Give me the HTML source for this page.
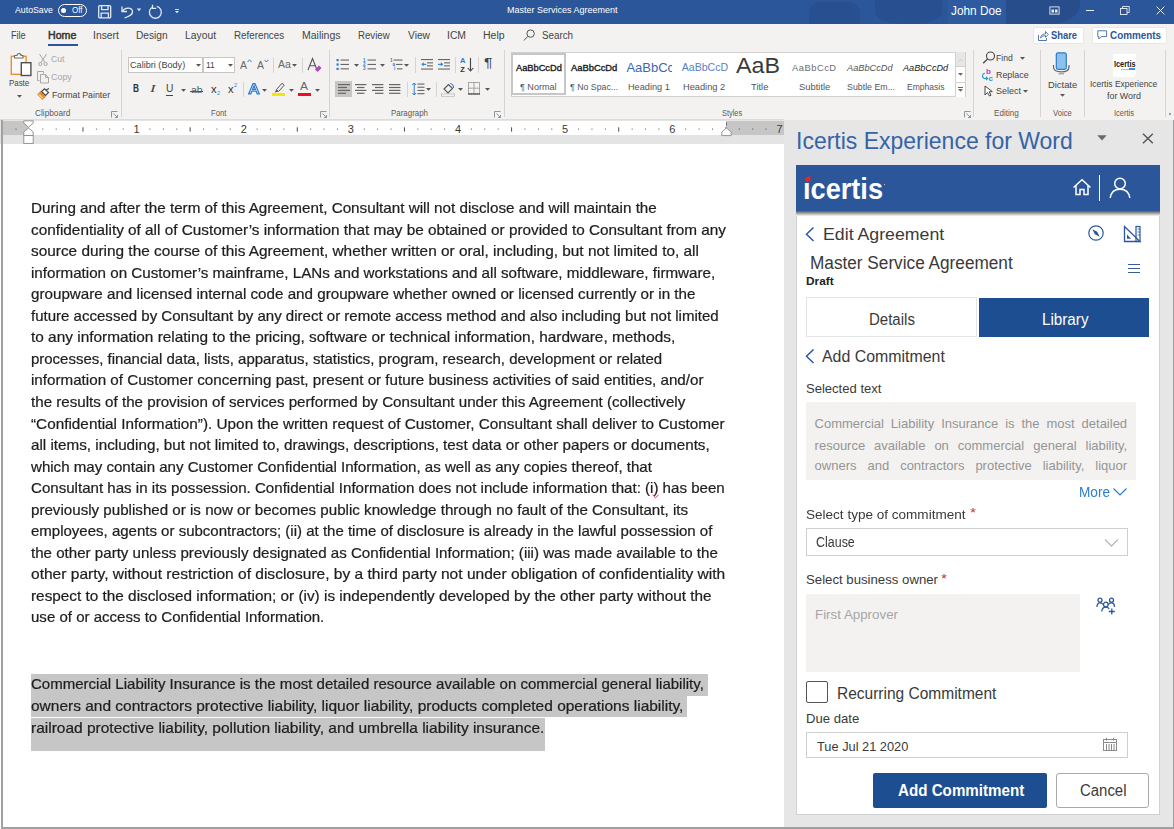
<!DOCTYPE html>
<html><head><meta charset="utf-8">
<style>
*{margin:0;padding:0;box-sizing:border-box}
html,body{width:1174px;height:829px;overflow:hidden;background:#fff;font-family:"Liberation Sans",sans-serif}
.a{position:absolute}
svg.a{overflow:visible}
.t{position:absolute;white-space:nowrap;line-height:1;transform-origin:0 0}
.dl{will-change:transform;position:absolute;left:30.6px;font-size:14.5px;color:#1e1e1e;-webkit-text-stroke:0.22px #1e1e1e;white-space:nowrap;line-height:1;transform-origin:0 0}
</style></head><body>
<div class="a" style="left:0px;top:0px;width:1174px;height:24px;background:#2b579a;"></div>
<div class="a" style="left:809px;top:2px;width:51px;height:22px;background:#284f8f;border-radius:11px 11px 0 0"></div>
<div class="a" style="left:875px;top:0px;width:67px;height:24px;background:#284f8f;border-radius:0 0 30px 30px/0 0 12px 12px"></div>
<div class="a" style="left:1006px;top:0px;width:74px;height:24px;background:#284d8b;border-radius:0 0 30px 0/0 0 20px 0"></div>
<div class="a" style="left:948px;top:0px;width:58px;height:24px;background:#2e5b9f;"></div>
<div class="t" style="left: 15px; top: 5.36px; font-size: 9.5px; color: rgb(255, 255, 255); transform: scaleX(0.9223); transform-origin: 0px 0px;">AutoSave</div>
<div class="a" style="left:58px;top:3.5px;width:29px;height:13px;background:transparent;border:1px solid #fff;border-radius:7px"></div>
<div class="a" style="left:61.3px;top:7.6px;width:5px;height:5px;background:#fff;border-radius:50%"></div>
<div class="t" style="left: 72px; top: 5.69px; font-size: 8.5px; color: rgb(255, 255, 255); transform: scaleX(0.9385); transform-origin: 0px 0px;">Off</div>
<svg class="a" style="left:97px;top:4px;" width="16" height="16" viewBox="0 0 16 16"><g fill="none" stroke="#e3e8f1" stroke-width="1.3"><rect x="1.7" y="1.6" width="12" height="12.3" rx="1"></rect><path d="M4.6 1.6 V5.6 H11 V1.6"></path><path d="M4.2 13.9 V9.2 H11.4 V13.9"></path></g></svg>
<svg class="a" style="left:120px;top:4px;" width="16" height="16" viewBox="0 0 16 16"><g fill="none" stroke="#e3e8f1" stroke-width="1.3"><path d="M2 2.5 V7.5 H7"></path><path d="M2.3 7.3 C4.5 3.5 12 2.8 12.5 7.5 C12.8 10 10.5 12 4.5 14"></path></g></svg>
<svg class="a" style="left:136px;top:8px;" width="6" height="4" viewBox="0 0 6 4"><path d="M0.8 0.5 H5.2 L3 3.2Z" fill="#e3e8f1"></path></svg>
<svg class="a" style="left:147px;top:4px;" width="16" height="16" viewBox="0 0 16 16"><g fill="none" stroke="#e3e8f1" stroke-width="1.3"><path d="M9.8 2.4 A6 6 0 1 1 4.8 3.4"></path><path d="M5.5 0.8 V4.4 H9.2"></path></g></svg>
<svg class="a" style="left:174px;top:8px;" width="6" height="6" viewBox="0 0 6 6"><rect x="1" y="1" width="4" height="0.9" fill="#e3e8f1"></rect><path d="M1 3 H5 L3 5.2Z" fill="#e3e8f1"></path></svg>
<div class="t" style="left: 507px; top: 5.26px; font-size: 9.5px; color: rgb(255, 255, 255); transform: scaleX(0.947); transform-origin: 0px 0px;">Master Services Agreement</div>
<div class="t" style="left: 951px; top: 4.57px; font-size: 12.5px; color: rgb(255, 255, 255); transform: scaleX(0.9455); transform-origin: 0px 0px;">John Doe</div>
<svg class="a" style="left:1049px;top:6px;" width="11" height="9" viewBox="0 0 11 9"><g fill="none" stroke="#e8edf5" stroke-width="0.9"><rect x="0.9" y="0.9" width="9.2" height="7.2"></rect></g><path d="M2.5 3.5 H5 V6.5 H2.5Z M6 3.5 H8.5 V6.5 H6Z" fill="#e8edf5"></path></svg>
<div class="a" style="left:1085.5px;top:10px;width:8.5px;height:0.9px;background:#e8edf5;"></div>
<svg class="a" style="left:1120px;top:6px;" width="10" height="9" viewBox="0 0 10 9"><g fill="none" stroke="#e8edf5" stroke-width="0.9"><rect x="0.5" y="2.5" width="6.5" height="6"></rect><path d="M2.5 2.5 V0.5 H9.2 V6.5 H7"></path></g></svg>
<svg class="a" style="left:1155.5px;top:5.5px;" width="9" height="9" viewBox="0 0 9 9"><path d="M0.6 0.6 L8.4 8.4 M8.4 0.6 L0.6 8.4" stroke="#e8edf5" stroke-width="1"></path></svg>
<div class="a" style="left:0px;top:24px;width:1174px;height:96px;background:#f3f2f1;"></div>
<div class="t" style="left: 10.9px; top: 30.7px; font-size: 10px; color: rgb(68, 68, 68); transform: scaleX(0.9116); transform-origin: 0px 0px;">File</div>
<div class="t" style="left: 93.4px; top: 30.7px; font-size: 10px; color: rgb(68, 68, 68); transform: scaleX(1.0354); transform-origin: 0px 0px;">Insert</div>
<div class="t" style="left: 136.3px; top: 30.7px; font-size: 10px; color: rgb(68, 68, 68); transform: scaleX(1.018); transform-origin: 0px 0px;">Design</div>
<div class="t" style="left: 185px; top: 30.7px; font-size: 10px; color: rgb(68, 68, 68); transform: scaleX(1.0323); transform-origin: 0px 0px;">Layout</div>
<div class="t" style="left: 234.4px; top: 30.7px; font-size: 10px; color: rgb(68, 68, 68); transform: scaleX(0.9797); transform-origin: 0px 0px;">References</div>
<div class="t" style="left: 301.5px; top: 30.7px; font-size: 10px; color: rgb(68, 68, 68); transform: scaleX(1.0494); transform-origin: 0px 0px;">Mailings</div>
<div class="t" style="left: 358.4px; top: 30.7px; font-size: 10px; color: rgb(68, 68, 68); transform: scaleX(0.9635); transform-origin: 0px 0px;">Review</div>
<div class="t" style="left: 408px; top: 30.7px; font-size: 10px; color: rgb(68, 68, 68); transform: scaleX(1.0233); transform-origin: 0px 0px;">View</div>
<div class="t" style="left: 447px; top: 30.7px; font-size: 10px; color: rgb(68, 68, 68); transform: scaleX(1.0358); transform-origin: 0px 0px;">ICM</div>
<div class="t" style="left: 483px; top: 30.7px; font-size: 10px; color: rgb(68, 68, 68); transform: scaleX(1.0545); transform-origin: 0px 0px;">Help</div>
<div class="t" style="left: 541.8px; top: 30.7px; font-size: 10px; color: rgb(68, 68, 68); transform: scaleX(0.9783); transform-origin: 0px 0px;">Search</div>
<div class="t" style="left: 48.4px; top: 30.7px; font-size: 10px; color: rgb(51, 51, 51); -webkit-text-stroke: 0.45px rgb(51, 51, 51); transform: scaleX(1.0604); transform-origin: 0px 0px;">Home</div>
<div class="a" style="left:48px;top:44px;width:29.5px;height:2px;background:#2b579a;"></div>
<svg class="a" style="left:522px;top:28px;" width="14" height="14" viewBox="0 0 14 14"><g fill="none" stroke="#555" stroke-width="1"><circle cx="8.6" cy="5.6" r="3.7"></circle><path d="M6 8.3 L1.8 12.5"></path></g></svg>
<div class="a" style="left:1033.4px;top:26.5px;width:50.8px;height:17.7px;background:#fff;border:1px solid #e9e7e5;border-radius:2px"></div>
<svg class="a" style="left:1037px;top:29px;" width="12" height="13" viewBox="0 0 12 13"><g fill="none" stroke="#4a70aa" stroke-width="0.95"><path d="M1.5 6 V11.5 H9.5 V9"></path><path d="M3.5 9 C4 6 6 4.8 8.5 4.8 V2.5 L11.2 5.5 L8.5 8.3 V6.6 C6.5 6.6 5 7.3 3.5 9Z"></path></g></svg>
<div class="t" style="left: 1051.3px; top: 30.13px; font-size: 10.5px; color: rgb(43, 87, 154); font-weight: bold; transform: scaleX(0.8942); transform-origin: 0px 0px;">Share</div>
<div class="a" style="left:1091.6px;top:26.5px;width:75.6px;height:17.7px;background:#fff;border:1px solid #e9e7e5;border-radius:2px"></div>
<svg class="a" style="left:1097px;top:30px;" width="11" height="11" viewBox="0 0 11 11"><path d="M0.8 0.8 H9.6 V6.6 H4.2 L1.8 9 V6.6 H0.8Z" fill="none" stroke="#4a70aa" stroke-width="0.95"></path></svg>
<div class="t" style="left: 1109.5px; top: 30.13px; font-size: 10.5px; color: rgb(43, 87, 154); font-weight: bold; transform: scaleX(0.9417); transform-origin: 0px 0px;">Comments</div>
<svg class="a" style="left:9px;top:52px;" width="24" height="25" viewBox="0 0 24 25"><rect x="2.3" y="4.3" width="14.8" height="18" fill="#faf9f8" stroke="#e8912d" stroke-width="1.4"></rect><path d="M5.5 6 V3.5 H8 C8 1 12 1 12 3.5 H14 V6Z" fill="#faf9f8" stroke="#6e6e6e" stroke-width="1.1"></path><rect x="12.3" y="10.7" width="9.6" height="12.8" fill="#fff" stroke="#505050" stroke-width="1.4"></rect></svg>
<div class="t" style="left: 9.1px; top: 79.43px; font-size: 9px; color: rgb(68, 68, 68); transform: scaleX(0.8777); transform-origin: 0px 0px;">Paste</div>
<svg class="a" style="left:16.7px;top:94.5px;" width="5" height="3" viewBox="0 0 5 3"><path d="M0 0 H5 L2.5 2.8Z" fill="#555"></path></svg>
<svg class="a" style="left:38px;top:53px;" width="10" height="13" viewBox="0 0 10 13"><g fill="none" stroke="#a8a8a8" stroke-width="1"><path d="M1.5 1 L7 9.5 M8.5 1 L3 9.5"></path><circle cx="2.3" cy="11" r="1.6"></circle><circle cx="7.7" cy="11" r="1.6"></circle></g></svg>
<div class="t" style="left: 51.1px; top: 55.43px; font-size: 9px; color: rgb(166, 166, 166); transform: scaleX(0.9489); transform-origin: 0px 0px;">Cut</div>
<svg class="a" style="left:36px;top:70px;" width="14" height="14" viewBox="0 0 14 14"><g fill="none" stroke="#a8a8a8" stroke-width="1"><path d="M3.5 10.5 H1.5 V1.5 H7.5 V3.5"></path><path d="M4.5 4.5 H9.5 L12.5 7.5 V13 H4.5Z"></path><path d="M9.5 4.5 V7.5 H12.5"></path></g></svg>
<div class="t" style="left: 51.1px; top: 72.73px; font-size: 9px; color: rgb(166, 166, 166); transform: scaleX(0.9897); transform-origin: 0px 0px;">Copy</div>
<svg class="a" style="left:36px;top:88px;" width="14" height="13" viewBox="0 0 14 13"><path d="M1 6.5 L6.5 12 L10 8.5 L4.5 3Z" fill="#e8912d"></path><path d="M3 6.5 L6.5 10" stroke="#fff" stroke-width="0.9"></path><path d="M5.5 3.5 L9.5 7.5 L12.5 4.5 L8.5 0.8Z" fill="#fff" stroke="#444" stroke-width="1.1"></path><path d="M10 2 L13 0.5" stroke="#444" stroke-width="1.1"></path></svg>
<div class="t" style="left: 51.6px; top: 90.83px; font-size: 9px; color: rgb(68, 68, 68); transform: scaleX(0.976); transform-origin: 0px 0px;">Format Painter</div>
<div class="t" style="left: 35.1px; top: 109.29px; font-size: 8.5px; color: rgb(90, 90, 90); transform: scaleX(0.9728); transform-origin: 0px 0px;">Clipboard</div>
<svg class="a" style="left:111px;top:111px;" width="7" height="7" viewBox="0 0 7 7"><path d="M0.5 6.5 V0.5 H6.5" fill="none" stroke="#8a8a8a" stroke-width="0.9"></path><path d="M2.5 2.5 L6.5 6.5 M6.5 4 V6.5 H4" fill="none" stroke="#8a8a8a" stroke-width="0.9"></path></svg>
<div class="a" style="left:120.9px;top:49.7px;width:1px;height:67.1px;background:#d6d4d2;"></div>
<div class="a" style="left:127.5px;top:57.2px;width:75.5px;height:16.3px;background:#fff;border:1px solid #c8c6c4"></div>
<div class="a" style="left:203px;top:57.2px;width:32.2px;height:16.3px;background:#fff;border:1px solid #c8c6c4"></div>
<div class="t" style="left: 129.5px; top: 60.06px; font-size: 9.5px; color: rgb(68, 68, 68); transform: scaleX(0.9592); transform-origin: 0px 0px;">Calibri (Body)</div>
<svg class="a" style="left:195.8px;top:63.900000000000006px;" width="5" height="3" viewBox="0 0 5 3"><path d="M0 0 H5 L2.5 2.8Z" fill="#555"></path></svg>
<div class="t" style="left: 205.8px; top: 60.06px; font-size: 9.5px; color: rgb(68, 68, 68); transform: scaleX(0.8911); transform-origin: 0px 0px;">11</div>
<svg class="a" style="left:228.1px;top:63.900000000000006px;" width="5" height="3" viewBox="0 0 5 3"><path d="M0 0 H5 L2.5 2.8Z" fill="#555"></path></svg>
<div class="t" style="left: 240px; top: 59.73px; font-size: 10.5px; color: rgb(102, 102, 102); transform: scaleX(0.9978); transform-origin: 0px 0px;">A</div>
<svg class="a" style="left:246.5px;top:59px;" width="5" height="4" viewBox="0 0 5 4"><path d="M0.5 3 L2.5 0.8 L4.5 3" fill="none" stroke="#2b7cd3" stroke-width="1"></path></svg>
<div class="t" style="left: 257.4px; top: 59.73px; font-size: 10.5px; color: rgb(102, 102, 102); transform: scaleX(0.9978); transform-origin: 0px 0px;">A</div>
<svg class="a" style="left:263.5px;top:59px;" width="5" height="4" viewBox="0 0 5 4"><path d="M0.5 0.8 L2.5 3 L4.5 0.8" fill="none" stroke="#2b7cd3" stroke-width="1"></path></svg>
<div class="a" style="left:272.7px;top:58px;width:1px;height:15px;background:#d6d4d2;"></div>
<div class="t" style="left: 278px; top: 59.9px; font-size: 10px; color: rgb(102, 102, 102); transform: scaleX(1.0462); transform-origin: 0px 0px;">Aa</div>
<svg class="a" style="left:291.5px;top:63.900000000000006px;" width="5" height="3" viewBox="0 0 5 3"><path d="M0 0 H5 L2.5 2.8Z" fill="#555"></path></svg>
<div class="a" style="left:302.3px;top:58px;width:1px;height:15px;background:#d6d4d2;"></div>
<svg class="a" style="left:307px;top:57px;" width="15" height="16" viewBox="0 0 15 16"><path d="M1 13 L5.5 1.5 L10 13 M2.8 8.8 H8.2" fill="none" stroke="#555" stroke-width="1.1"></path><path d="M8 12.5 L12 8.5 L14.5 11 L10.5 15Z" fill="#b146c2"></path></svg>
<div class="t" style="left: 132.8px; top: 84.19px; font-size: 10px; color: rgb(51, 51, 51); font-weight: bold; transform: scaleX(0.8294); transform-origin: 0px 0px;">B</div>
<div class="t" style="left: 150px; top: 84.19px; font-size: 10px; color: rgb(68, 68, 68); font-style: italic; font-family: &quot;Liberation Serif&quot;; transform: scaleX(1.6748); transform-origin: 0px 0px;">I</div>
<div class="t" style="left: 166px; top: 84.19px; font-size: 10px; color: rgb(68, 68, 68); transform: scaleX(1.0229); transform-origin: 0px 0px;">U</div>
<div class="a" style="left:166px;top:95.2px;width:7.4px;height:0.9px;background:#444;"></div>
<svg class="a" style="left:180.7px;top:88.5px;" width="5" height="3" viewBox="0 0 5 3"><path d="M0 0 H5 L2.5 2.8Z" fill="#555"></path></svg>
<div class="t" style="left: 190.8px; top: 85.26px; font-size: 9.5px; color: rgb(85, 85, 85); transform: scaleX(1.1061); transform-origin: 0px 0px;">ab</div>
<div class="a" style="left:189.8px;top:90.8px;width:13.5px;height:0.9px;background:#555;"></div>
<div class="t" style="left: 210.9px; top: 85.19px; font-size: 10px; color: rgb(51, 51, 51); transform: scaleX(1.12); transform-origin: 0px 0px;">x</div>
<div class="t" style="left: 216.6px; top: 90.22px; font-size: 6px; color: rgb(43, 124, 211); transform: scaleX(0.8972); transform-origin: 0px 0px;">2</div>
<div class="t" style="left: 228.3px; top: 85.19px; font-size: 10px; color: rgb(51, 51, 51); transform: scaleX(1.12); transform-origin: 0px 0px;">x</div>
<div class="t" style="left: 234px; top: 81.72px; font-size: 6px; color: rgb(43, 124, 211); transform: scaleX(0.8972); transform-origin: 0px 0px;">2</div>
<div class="a" style="left:242.8px;top:82px;width:1px;height:15px;background:#d6d4d2;"></div>
<svg class="a" style="left:248px;top:83px;" width="12" height="12" viewBox="0 0 12 12"><path d="M0.7 10.8 L5 0.7 H7 L11.3 10.8 H9.2 L8.2 8.2 H3.8 L2.8 10.8Z M4.6 6.4 H7.4 L6 2.8Z" fill="none" stroke="#2b7cd3" stroke-width="1.2"></path></svg>
<svg class="a" style="left:261.8px;top:88.5px;" width="5" height="3" viewBox="0 0 5 3"><path d="M0 0 H5 L2.5 2.8Z" fill="#555"></path></svg>
<svg class="a" style="left:273px;top:82px;" width="12" height="11" viewBox="0 0 12 11"><path d="M3.5 7.5 L9 1.2 L11.2 3.2 L5.5 9.5Z" fill="none" stroke="#555" stroke-width="1"></path><path d="M3.5 7.5 L1.5 10.5 L5.5 9.5Z" fill="#555"></path></svg>
<div class="a" style="left:272.2px;top:92.8px;width:12.8px;height:2.8px;background:#f5e800;"></div>
<svg class="a" style="left:288.6px;top:88.5px;" width="5" height="3" viewBox="0 0 5 3"><path d="M0 0 H5 L2.5 2.8Z" fill="#555"></path></svg>
<div class="t" style="left: 299.8px; top: 82.29px; font-size: 10px; color: rgb(102, 102, 102); transform: scaleX(1.1991); transform-origin: 0px 0px;">A</div>
<div class="a" style="left:298.4px;top:92.8px;width:12.8px;height:2.8px;background:#e81123;"></div>
<svg class="a" style="left:315.2px;top:88.5px;" width="5" height="3" viewBox="0 0 5 3"><path d="M0 0 H5 L2.5 2.8Z" fill="#555"></path></svg>
<div class="t" style="left: 210.9px; top: 109.49px; font-size: 8.5px; color: rgb(90, 90, 90); transform: scaleX(0.9051); transform-origin: 0px 0px;">Font</div>
<svg class="a" style="left:319.5px;top:111px;" width="7" height="7" viewBox="0 0 7 7"><path d="M0.5 6.5 V0.5 H6.5" fill="none" stroke="#8a8a8a" stroke-width="0.9"></path><path d="M2.5 2.5 L6.5 6.5 M6.5 4 V6.5 H4" fill="none" stroke="#8a8a8a" stroke-width="0.9"></path></svg>
<div class="a" style="left:328.6px;top:49.7px;width:1px;height:67.1px;background:#d6d4d2;"></div>
<svg class="a" style="left:336px;top:58px;" width="14" height="13" viewBox="0 0 14 13"><g fill="#2b7cd3"><rect x="0.5" y="1" width="2.2" height="2.2"></rect><rect x="0.5" y="5.4" width="2.2" height="2.2"></rect><rect x="0.5" y="9.8" width="2.2" height="2.2"></rect></g><g fill="#666"><rect x="4.5" y="1.5" width="8.5" height="1.1"></rect><rect x="4.5" y="5.9" width="8.5" height="1.1"></rect><rect x="4.5" y="10.3" width="8.5" height="1.1"></rect></g></svg>
<svg class="a" style="left:353.6px;top:63.5px;" width="5" height="3" viewBox="0 0 5 3"><path d="M0 0 H5 L2.5 2.8Z" fill="#555"></path></svg>
<svg class="a" style="left:363px;top:58px;" width="14" height="13" viewBox="0 0 14 13"><g fill="#2b7cd3" font-size="4.5" font-weight="bold" font-family="Liberation Sans"><text x="0" y="3.6">1</text><text x="0" y="8">2</text><text x="0" y="12.4">3</text></g><g fill="#666"><rect x="4.5" y="1.5" width="8.5" height="1.1"></rect><rect x="4.5" y="5.9" width="8.5" height="1.1"></rect><rect x="4.5" y="10.3" width="8.5" height="1.1"></rect></g></svg>
<svg class="a" style="left:380.2px;top:63.5px;" width="5" height="3" viewBox="0 0 5 3"><path d="M0 0 H5 L2.5 2.8Z" fill="#555"></path></svg>
<svg class="a" style="left:389.5px;top:57.5px;" width="14" height="14" viewBox="0 0 14 14"><g fill="#2b7cd3" font-size="4.5" font-weight="bold" font-family="Liberation Sans"><text x="0" y="3.6">1</text><text x="2.5" y="8">a</text><text x="4" y="12.4">i</text></g><g fill="#666"><rect x="3.5" y="1.5" width="9" height="1.1"></rect><rect x="6" y="5.9" width="6.5" height="1.1"></rect><rect x="7" y="10.3" width="5.5" height="1.1"></rect></g></svg>
<svg class="a" style="left:404.4px;top:63.5px;" width="5" height="3" viewBox="0 0 5 3"><path d="M0 0 H5 L2.5 2.8Z" fill="#555"></path></svg>
<div class="a" style="left:415.4px;top:57px;width:1px;height:16px;background:#d6d4d2;"></div>
<svg class="a" style="left:420.5px;top:58px;" width="12" height="13" viewBox="0 0 12 13"><g fill="#666"><rect x="0" y="1" width="12" height="1.1"></rect><rect x="6" y="4.3" width="6" height="1.1"></rect><rect x="6" y="7.3" width="6" height="1.1"></rect><rect x="0" y="10.5" width="12" height="1.1"></rect></g><path d="M0.3 6.3 L2.8 4.3 V8.3Z" fill="#2b7cd3"></path><rect x="2.5" y="5.8" width="2.8" height="1.1" fill="#2b7cd3"></rect></svg>
<svg class="a" style="left:437.5px;top:58px;" width="12" height="13" viewBox="0 0 12 13"><g fill="#666"><rect x="0" y="1" width="12" height="1.1"></rect><rect x="6" y="4.3" width="6" height="1.1"></rect><rect x="6" y="7.3" width="6" height="1.1"></rect><rect x="0" y="10.5" width="12" height="1.1"></rect></g><path d="M5.3 6.3 L2.8 4.3 V8.3Z" fill="#2b7cd3"></path><rect x="0" y="5.8" width="3" height="1.1" fill="#2b7cd3"></rect></svg>
<div class="a" style="left:455.4px;top:57px;width:1px;height:16px;background:#d6d4d2;"></div>
<svg class="a" style="left:459.5px;top:57px;" width="14" height="16" viewBox="0 0 14 16"><text x="0" y="6.3" font-size="7.5" font-weight="bold" font-family="Liberation Sans" fill="#2b7cd3">A</text><text x="0.3" y="14.5" font-size="7.5" font-weight="bold" font-family="Liberation Sans" fill="#333">Z</text><path d="M10.5 1 V14 M7.8 11 L10.5 14 L13.2 11" fill="none" stroke="#444" stroke-width="1.1"></path></svg>
<div class="a" style="left:477.6px;top:57px;width:1px;height:16px;background:#d6d4d2;"></div>
<div class="t" style="left: 484.4px; top: 56.93px; font-size: 12px; color: rgb(68, 68, 68); transform: scaleX(1.3172); transform-origin: 0px 0px;">¶</div>
<div class="a" style="left:335px;top:80.8px;width:16.9px;height:16.7px;background:#c8c6c4;"></div>
<svg class="a" style="left:337.5px;top:83px;" width="12" height="12" viewBox="0 0 12 12"><rect x="0" y="1.0" width="12" height="1.2" fill="#666"></rect><rect x="0" y="3.9" width="9" height="1.2" fill="#666"></rect><rect x="0" y="6.8" width="12" height="1.2" fill="#666"></rect><rect x="0" y="9.7" width="8" height="1.2" fill="#666"></rect></svg>
<svg class="a" style="left:354.9px;top:83px;" width="12" height="12" viewBox="0 0 12 12"><rect x="0" y="1.0" width="11.4" height="1.2" fill="#666"></rect><rect x="2" y="3.9" width="7.4" height="1.2" fill="#666"></rect><rect x="0" y="6.8" width="11.4" height="1.2" fill="#666"></rect><rect x="2" y="9.7" width="7.4" height="1.2" fill="#666"></rect></svg>
<svg class="a" style="left:372px;top:83px;" width="12" height="12" viewBox="0 0 12 12"><rect x="0" y="1.0" width="11.4" height="1.2" fill="#666"></rect><rect x="3" y="3.9" width="8.4" height="1.2" fill="#666"></rect><rect x="0" y="6.8" width="11.4" height="1.2" fill="#666"></rect><rect x="3" y="9.7" width="8.4" height="1.2" fill="#666"></rect></svg>
<svg class="a" style="left:389px;top:83px;" width="12" height="12" viewBox="0 0 12 12"><rect x="0" y="1.0" width="11.4" height="1.2" fill="#666"></rect><rect x="0" y="3.9" width="11.4" height="1.2" fill="#666"></rect><rect x="0" y="6.8" width="11.4" height="1.2" fill="#666"></rect><rect x="0" y="9.7" width="11.4" height="1.2" fill="#666"></rect></svg>
<div class="a" style="left:406.5px;top:82px;width:1px;height:15px;background:#d6d4d2;"></div>
<svg class="a" style="left:411.5px;top:82px;" width="13" height="14" viewBox="0 0 13 14"><path d="M2.2 1 V13 M0.3 3 L2.2 1 L4.1 3 M0.3 11 L2.2 13 L4.1 11" fill="none" stroke="#2b7cd3" stroke-width="1"></path><g fill="#666"><rect x="5.5" y="1.5" width="7" height="1.1"></rect><rect x="5.5" y="4.7" width="7" height="1.1"></rect><rect x="5.5" y="7.9" width="7" height="1.1"></rect><rect x="5.5" y="11.1" width="7" height="1.1"></rect></g></svg>
<svg class="a" style="left:425.7px;top:88.0px;" width="5" height="3" viewBox="0 0 5 3"><path d="M0 0 H5 L2.5 2.8Z" fill="#555"></path></svg>
<div class="a" style="left:436.4px;top:82px;width:1px;height:15px;background:#d6d4d2;"></div>
<svg class="a" style="left:441px;top:82px;" width="14" height="15" viewBox="0 0 14 15"><path d="M3 7 L7.5 2.5 L11.5 6.5 L7 11Z" fill="none" stroke="#555" stroke-width="1.1"></path><path d="M9 1.5 C11 1.5 12.5 3.5 12.5 6" fill="none" stroke="#2b7cd3" stroke-width="1.2"></path><rect x="0.5" y="12" width="13" height="2.2" fill="#fff" stroke="#aaa" stroke-width="0.7"></rect></svg>
<svg class="a" style="left:458.0px;top:88.0px;" width="5" height="3" viewBox="0 0 5 3"><path d="M0 0 H5 L2.5 2.8Z" fill="#555"></path></svg>
<svg class="a" style="left:468px;top:82px;" width="12" height="13" viewBox="0 0 12 13"><g fill="none" stroke="#777" stroke-width="1"><rect x="0.5" y="0.5" width="11" height="11.5" stroke-dasharray="1.2 0.8"></rect><path d="M6 0.5 V12 M0.5 6.2 H11.5" stroke-dasharray="1.2 0.8"></path></g><rect x="0" y="11.3" width="12" height="1.3" fill="#555"></rect></svg>
<svg class="a" style="left:484.8px;top:88.0px;" width="5" height="3" viewBox="0 0 5 3"><path d="M0 0 H5 L2.5 2.8Z" fill="#555"></path></svg>
<div class="t" style="left: 391.2px; top: 109.49px; font-size: 8.5px; color: rgb(90, 90, 90); transform: scaleX(0.9319); transform-origin: 0px 0px;">Paragraph</div>
<svg class="a" style="left:494.3px;top:111px;" width="7" height="7" viewBox="0 0 7 7"><path d="M0.5 6.5 V0.5 H6.5" fill="none" stroke="#8a8a8a" stroke-width="0.9"></path><path d="M2.5 2.5 L6.5 6.5 M6.5 4 V6.5 H4" fill="none" stroke="#8a8a8a" stroke-width="0.9"></path></svg>
<div class="a" style="left:503.6px;top:49.7px;width:1px;height:67.1px;background:#d6d4d2;"></div>
<div class="a" style="left:510.7px;top:51.7px;width:455px;height:45.5px;background:#fff;border:1px solid #d2d0ce"></div>
<div class="a" style="left:511.4px;top:53px;width:54.2px;height:42px;background:transparent;border:2px solid #c6c6c6"></div>
<div class="t" style="left: 516.2px; top: 62.96px; font-size: 9.5px; color: rgb(17, 17, 17); -webkit-text-stroke: 0.35px rgb(34, 34, 34); transform: scaleX(0.9745); transform-origin: 0px 0px;">AaBbCcDd</div>
<div class="t" style="left: 520.3px; top: 83.03px; font-size: 9px; color: rgb(85, 85, 85); transform: scaleX(1.0043); transform-origin: 0px 0px;">¶ Normal</div>
<div class="t" style="left: 571px; top: 62.96px; font-size: 9.5px; color: rgb(17, 17, 17); -webkit-text-stroke: 0.35px rgb(34, 34, 34); transform: scaleX(0.9851); transform-origin: 0px 0px;">AaBbCcDd</div>
<div class="t" style="left: 569.9px; top: 83.03px; font-size: 9px; color: rgb(85, 85, 85); transform: scaleX(0.9745); transform-origin: 0px 0px;">¶ No Spac...</div>
<div class="a" style="left:626px;top:55px;width:46px;height:25px;overflow:hidden"><div class="t" style="left:0.4px;top:5.80px;font-size:13px;color:#3f66b0;">AaBbCcDd</div>
</div><div class="t" style="left: 628px; top: 83.03px; font-size: 9px; color: rgb(85, 85, 85); transform: scaleX(1.0183); transform-origin: 0px 0px;">Heading 1</div>
<div class="a" style="left:681px;top:55px;width:47px;height:25px;overflow:hidden"><div class="t" style="left:0.7px;top:7.12px;font-size:10.6px;color:#5a7fc2;">AaBbCcDd</div>
</div><div class="t" style="left: 683.2px; top: 83.03px; font-size: 9px; color: rgb(85, 85, 85); transform: scaleX(1.0281); transform-origin: 0px 0px;">Heading 2</div>
<div class="a" style="left:0;top:0;width:0;height:0"></div><div class="t" style="left: 736.3px; top: 54.53px; font-size: 22px; color: rgb(58, 58, 58); transform: scaleX(1.0579); transform-origin: 0px 0px;">AaB</div>
<div class="t" style="left: 750.9px; top: 83.03px; font-size: 9px; color: rgb(85, 85, 85); transform: scaleX(1.0437); transform-origin: 0px 0px;">Title</div>
<div class="t" style="left: 792.2px; top: 62.76px; font-size: 9.5px; color: rgb(110, 110, 110); letter-spacing: 0.5px; transform: scaleX(0.9863); transform-origin: 0px 0px;">AaBbCcD</div>
<div class="t" style="left: 799px; top: 83.03px; font-size: 9px; color: rgb(85, 85, 85); transform: scaleX(1.0422); transform-origin: 0px 0px;">Subtitle</div>
<div class="t" style="left: 847.1px; top: 62.76px; font-size: 9.5px; color: rgb(85, 85, 85); font-style: italic; transform: scaleX(0.9702); transform-origin: 0px 0px;">AaBbCcDd</div>
<div class="t" style="left: 846.6px; top: 83.03px; font-size: 9px; color: rgb(85, 85, 85); transform: scaleX(0.979); transform-origin: 0px 0px;">Subtle Em...</div>
<div class="t" style="left: 902.8px; top: 62.76px; font-size: 9.5px; color: rgb(34, 34, 34); font-style: italic; transform: scaleX(0.9617); transform-origin: 0px 0px;">AaBbCcDd</div>
<div class="t" style="left: 907.1px; top: 83.03px; font-size: 9px; color: rgb(85, 85, 85); transform: scaleX(0.949); transform-origin: 0px 0px;">Emphasis</div>
<div class="a" style="left:954.9px;top:52.2px;width:10.6px;height:15px;background:#e6e6e6;border-left:1px solid #d2d0ce;border-bottom:1px solid #d2d0ce"></div>
<div class="a" style="left:954.9px;top:67px;width:10.6px;height:15.6px;background:#fff;border-left:1px solid #d2d0ce;border-bottom:1px solid #d2d0ce"></div>
<div class="a" style="left:954.9px;top:82.6px;width:10.6px;height:14px;background:#fff;border-left:1px solid #d2d0ce"></div>
<svg class="a" style="left:958px;top:58.5px;" width="5" height="3" viewBox="0 0 5 3"><path d="M0.5 2.5 L2.5 0.5 L4.5 2.5" fill="none" stroke="#c0c0c0" stroke-width="0.8"></path></svg>
<svg class="a" style="left:957.7px;top:73.0px;" width="5" height="3" viewBox="0 0 5 3"><path d="M0 0 H5 L2.5 2.8Z" fill="#666"></path></svg>
<div class="a" style="left:957.7px;top:86.8px;width:5px;height:0.8px;background:#666;"></div>
<svg class="a" style="left:957.7px;top:88.5px;" width="5" height="3" viewBox="0 0 5 3"><path d="M0 0 H5 L2.5 2.8Z" fill="#666"></path></svg>
<div class="t" style="left: 721.8px; top: 109.49px; font-size: 8.5px; color: rgb(90, 90, 90); transform: scaleX(0.8723); transform-origin: 0px 0px;">Styles</div>
<svg class="a" style="left:964px;top:111px;" width="7" height="7" viewBox="0 0 7 7"><path d="M0.5 6.5 V0.5 H6.5" fill="none" stroke="#8a8a8a" stroke-width="0.9"></path><path d="M2.5 2.5 L6.5 6.5 M6.5 4 V6.5 H4" fill="none" stroke="#8a8a8a" stroke-width="0.9"></path></svg>
<div class="a" style="left:973.3px;top:49.7px;width:1px;height:67.1px;background:#d6d4d2;"></div>
<svg class="a" style="left:982px;top:51px;" width="14" height="13" viewBox="0 0 14 13"><circle cx="8.5" cy="5" r="4" fill="none" stroke="#444" stroke-width="1.1"></circle><path d="M5.6 7.9 L1.2 12.3" stroke="#444" stroke-width="1.3"></path></svg>
<div class="t" style="left: 996.4px; top: 53.83px; font-size: 9px; color: rgb(68, 68, 68); transform: scaleX(0.9534); transform-origin: 0px 0px;">Find</div>
<svg class="a" style="left:1019.6px;top:56.5px;" width="5" height="3" viewBox="0 0 5 3"><path d="M0 0 H5 L2.5 2.8Z" fill="#555"></path></svg>
<svg class="a" style="left:981px;top:67px;" width="14" height="14" viewBox="0 0 14 14"><text x="5" y="6.5" font-size="8" font-weight="bold" font-family="Liberation Sans" fill="#b146c2">b</text><text x="7.5" y="13.5" font-size="8" font-weight="bold" font-family="Liberation Sans" fill="#2b9ad3">c</text><path d="M3.8 6.2 C1 7 0.5 10.5 3.5 11.5 H6.5 M5 10 L6.6 11.5 L5 13" fill="none" stroke="#2b9ad3" stroke-width="1.2"></path></svg>
<div class="t" style="left: 996.4px; top: 70.63px; font-size: 9px; color: rgb(68, 68, 68); transform: scaleX(0.9869); transform-origin: 0px 0px;">Replace</div>
<svg class="a" style="left:983.5px;top:85px;" width="9" height="12" viewBox="0 0 9 12"><path d="M1 1 V10 L3.5 7.5 L5.5 11 L7 10.2 L5.2 6.8 L8.3 6.6Z" fill="#fff" stroke="#444" stroke-width="1"></path></svg>
<div class="t" style="left: 996.4px; top: 86.83px; font-size: 9px; color: rgb(68, 68, 68); transform: scaleX(0.9954); transform-origin: 0px 0px;">Select</div>
<svg class="a" style="left:1022.8px;top:89.5px;" width="5" height="3" viewBox="0 0 5 3"><path d="M0 0 H5 L2.5 2.8Z" fill="#555"></path></svg>
<div class="t" style="left: 994px; top: 109.49px; font-size: 8.5px; color: rgb(90, 90, 90); transform: scaleX(0.95); transform-origin: 0px 0px;">Editing</div>
<div class="a" style="left:1039.5px;top:49.7px;width:1px;height:67.1px;background:#d6d4d2;"></div>
<svg class="a" style="left:1052px;top:52px;" width="19" height="23" viewBox="0 0 19 23"><rect x="4.3" y="0.8" width="10" height="16.5" rx="1.8" fill="#8cc1ec" stroke="#2b7cd3" stroke-width="1.2"></rect><path d="M1.5 13 V15 C1.5 18.5 4 19.8 9.3 19.8 C14.5 19.8 17 18.5 17 15 V13" fill="none" stroke="#666" stroke-width="1.2"></path><path d="M6.5 21.8 H12" stroke="#888" stroke-width="1"></path></svg>
<div class="t" style="left: 1047.7px; top: 79.56px; font-size: 9.5px; color: rgb(68, 68, 68); transform: scaleX(0.9872); transform-origin: 0px 0px;">Dictate</div>
<svg class="a" style="left:1059.5px;top:94.1px;" width="5" height="3" viewBox="0 0 5 3"><path d="M0 0 H5 L2.5 2.8Z" fill="#555"></path></svg>
<div class="t" style="left: 1052.5px; top: 109.49px; font-size: 8.5px; color: rgb(90, 90, 90); transform: scaleX(0.904); transform-origin: 0px 0px;">Voice</div>
<div class="a" style="left:1083.8px;top:49.7px;width:1px;height:67.1px;background:#d6d4d2;"></div>
<div class="a" style="left:1112.8px;top:53.9px;width:23.2px;height:23.1px;background:#fff;"></div>
<div class="t" style="left: 1113.6px; top: 60px; font-size: 8.5px; color: rgb(26, 26, 26); font-weight: bold; transform: scaleX(0.8624); transform-origin: 0px 0px;">ıcertis</div>
<div class="a" style="left:1114px;top:60.5px;width:1.8px;height:1.5px;background:#e8262b;"></div>
<div class="a" style="left:1121px;top:68.8px;width:8px;height:0.6px;background:#bbb;"></div>
<div class="a" style="left:1129.3px;top:68.3px;width:5.8px;height:1.5px;background:#3d8fd8;"></div>
<div class="t" style="left: 1090.4px; top: 80.33px; font-size: 9px; color: rgb(68, 68, 68); transform: scaleX(0.9408); transform-origin: 0px 0px;">Icertis Experience</div>
<div class="t" style="left: 1107.3px; top: 91.63px; font-size: 9px; color: rgb(68, 68, 68); transform: scaleX(0.9871); transform-origin: 0px 0px;">for Word</div>
<div class="t" style="left: 1113.9px; top: 109.49px; font-size: 8.5px; color: rgb(90, 90, 90); transform: scaleX(0.8822); transform-origin: 0px 0px;">Icertis</div>
<div class="a" style="left:1165px;top:49.7px;width:1px;height:67.1px;background:#d6d4d2;"></div>
<div class="a" style="left:1169px;top:113.2px;width:1.6px;height:1.6px;background:#8a8a8a;border-radius:50%"></div>
<div class="a" style="left:0px;top:119px;width:784px;height:1px;background:#dcdcdc;"></div>
<div class="a" style="left:0px;top:120px;width:784px;height:24px;background:#e4e4e4;"></div>
<div class="a" style="left:3px;top:121px;width:25.5px;height:14px;background:#c6c6c6;"></div>
<div class="a" style="left:28.5px;top:121px;width:697.5px;height:14px;background:#fff;"></div>
<div class="a" style="left:726px;top:121px;width:58px;height:14px;background:#c6c6c6;"></div>
<svg class="a" style="left:0;top:0" width="784" height="144" viewBox="0 0 784 144"><rect x="15.51" y="128.6" width="1" height="1" fill="#4a4a4a"></rect><rect x="42.29" y="128.6" width="1" height="1" fill="#4a4a4a"></rect><rect x="55.69" y="128.6" width="1" height="1" fill="#4a4a4a"></rect><rect x="69.08" y="128.6" width="1" height="1" fill="#4a4a4a"></rect><rect x="82.47" y="127.3" width="1" height="4.3" fill="#4a4a4a"></rect><rect x="95.87" y="128.6" width="1" height="1" fill="#4a4a4a"></rect><rect x="109.26" y="128.6" width="1" height="1" fill="#4a4a4a"></rect><rect x="122.66" y="128.6" width="1" height="1" fill="#4a4a4a"></rect><text x="136.55" y="133" font-size="11" text-anchor="middle" font-family="Liberation Sans" fill="#3a3a3a">1</text><rect x="149.44" y="128.6" width="1" height="1" fill="#4a4a4a"></rect><rect x="162.84" y="128.6" width="1" height="1" fill="#4a4a4a"></rect><rect x="176.23" y="128.6" width="1" height="1" fill="#4a4a4a"></rect><rect x="189.63" y="127.3" width="1" height="4.3" fill="#4a4a4a"></rect><rect x="203.02" y="128.6" width="1" height="1" fill="#4a4a4a"></rect><rect x="216.41" y="128.6" width="1" height="1" fill="#4a4a4a"></rect><rect x="229.81" y="128.6" width="1" height="1" fill="#4a4a4a"></rect><text x="243.70" y="133" font-size="11" text-anchor="middle" font-family="Liberation Sans" fill="#3a3a3a">2</text><rect x="256.59" y="128.6" width="1" height="1" fill="#4a4a4a"></rect><rect x="269.99" y="128.6" width="1" height="1" fill="#4a4a4a"></rect><rect x="283.38" y="128.6" width="1" height="1" fill="#4a4a4a"></rect><rect x="296.77" y="127.3" width="1" height="4.3" fill="#4a4a4a"></rect><rect x="310.17" y="128.6" width="1" height="1" fill="#4a4a4a"></rect><rect x="323.56" y="128.6" width="1" height="1" fill="#4a4a4a"></rect><rect x="336.96" y="128.6" width="1" height="1" fill="#4a4a4a"></rect><text x="350.85" y="133" font-size="11" text-anchor="middle" font-family="Liberation Sans" fill="#3a3a3a">3</text><rect x="363.74" y="128.6" width="1" height="1" fill="#4a4a4a"></rect><rect x="377.14" y="128.6" width="1" height="1" fill="#4a4a4a"></rect><rect x="390.53" y="128.6" width="1" height="1" fill="#4a4a4a"></rect><rect x="403.93" y="127.3" width="1" height="4.3" fill="#4a4a4a"></rect><rect x="417.32" y="128.6" width="1" height="1" fill="#4a4a4a"></rect><rect x="430.71" y="128.6" width="1" height="1" fill="#4a4a4a"></rect><rect x="444.11" y="128.6" width="1" height="1" fill="#4a4a4a"></rect><text x="458.00" y="133" font-size="11" text-anchor="middle" font-family="Liberation Sans" fill="#3a3a3a">4</text><rect x="470.89" y="128.6" width="1" height="1" fill="#4a4a4a"></rect><rect x="484.29" y="128.6" width="1" height="1" fill="#4a4a4a"></rect><rect x="497.68" y="128.6" width="1" height="1" fill="#4a4a4a"></rect><rect x="511.07" y="127.3" width="1" height="4.3" fill="#4a4a4a"></rect><rect x="524.47" y="128.6" width="1" height="1" fill="#4a4a4a"></rect><rect x="537.86" y="128.6" width="1" height="1" fill="#4a4a4a"></rect><rect x="551.26" y="128.6" width="1" height="1" fill="#4a4a4a"></rect><text x="565.15" y="133" font-size="11" text-anchor="middle" font-family="Liberation Sans" fill="#3a3a3a">5</text><rect x="578.04" y="128.6" width="1" height="1" fill="#4a4a4a"></rect><rect x="591.44" y="128.6" width="1" height="1" fill="#4a4a4a"></rect><rect x="604.83" y="128.6" width="1" height="1" fill="#4a4a4a"></rect><rect x="618.23" y="127.3" width="1" height="4.3" fill="#4a4a4a"></rect><rect x="631.62" y="128.6" width="1" height="1" fill="#4a4a4a"></rect><rect x="645.01" y="128.6" width="1" height="1" fill="#4a4a4a"></rect><rect x="658.41" y="128.6" width="1" height="1" fill="#4a4a4a"></rect><text x="672.30" y="133" font-size="11" text-anchor="middle" font-family="Liberation Sans" fill="#3a3a3a">6</text><rect x="685.19" y="128.6" width="1" height="1" fill="#4a4a4a"></rect><rect x="698.59" y="128.6" width="1" height="1" fill="#4a4a4a"></rect><rect x="711.98" y="128.6" width="1" height="1" fill="#4a4a4a"></rect><rect x="725.38" y="127.3" width="1" height="4.3" fill="#4a4a4a"></rect><rect x="738.77" y="128.6" width="1" height="1" fill="#4a4a4a"></rect><rect x="752.16" y="128.6" width="1" height="1" fill="#4a4a4a"></rect><rect x="765.56" y="128.6" width="1" height="1" fill="#4a4a4a"></rect><text x="779.45" y="133" font-size="11" text-anchor="middle" font-family="Liberation Sans" fill="#3a3a3a">7</text></svg>
<svg class="a" style="left:23px;top:119.5px;" width="12" height="26" viewBox="0 0 12 26"><path d="M0.8 0.8 H10.2 V3.2 L5.5 7.2 L0.8 3.2Z" fill="#fff" stroke="#8a8a8a" stroke-width="0.9"></path><path d="M5.5 8 L10.2 12 V15.6 H0.8 V12Z" fill="#fff" stroke="#8a8a8a" stroke-width="0.9"></path><rect x="0.8" y="15.6" width="9.4" height="7.8" fill="#fff" stroke="#8a8a8a" stroke-width="0.9"></rect></svg>
<svg class="a" style="left:720.5px;top:119.5px;" width="12" height="18" viewBox="0 0 12 18"><path d="M5.5 8 L10.2 12 V15.6 H0.8 V12Z" fill="#fff" stroke="#8a8a8a" stroke-width="0.9"></path><rect x="5" y="2.5" width="1" height="3" fill="#666"></rect></svg>
<div class="a" style="left:3px;top:144px;width:781px;height:683px;background:#fff;"></div>
<div class="a" style="left:1px;top:120px;width:2px;height:709px;background:#a0a0a0;"></div>
<div class="a" style="left:1px;top:827px;width:1173px;height:2px;background:#a0a0a0;"></div>
<div class="a" style="left:31px;top:674.3px;width:677.4px;height:21.6px;background:#c6c6c6;"></div>
<div class="a" style="left:31px;top:695.9px;width:656.4px;height:21.6px;background:#c6c6c6;"></div>
<div class="a" style="left:31px;top:717.5px;width:514.4px;height:33.5px;background:#c6c6c6;"></div>
<div class="dl" style="top: 201.03px; transform: scaleX(1.0507); transform-origin: 0px 0px;">During and after the term of this Agreement, Consultant will not disclose and will maintain the</div>
<div class="dl" style="top: 222.58px; transform: scaleX(1.0563); transform-origin: 0px 0px;">confidentiality of all of Customer’s information that may be obtained or provided to Consultant from any</div>
<div class="dl" style="top: 244.13px; transform: scaleX(1.0597); transform-origin: 0px 0px;">source during the course of this Agreement, whether written or oral, including, but not limited to, all</div>
<div class="dl" style="top: 265.68px; transform: scaleX(1.0464); transform-origin: 0px 0px;">information on Customer’s mainframe, LANs and workstations and all software, middleware, firmware,</div>
<div class="dl" style="top: 287.23px; transform: scaleX(1.0474); transform-origin: 0px 0px;">groupware and licensed internal code and groupware whether owned or licensed currently or in the</div>
<div class="dl" style="top: 308.78px; transform: scaleX(1.0367); transform-origin: 0px 0px;">future accessed by Consultant by any direct or remote access method and also including but not limited</div>
<div class="dl" style="top: 330.33px; transform: scaleX(1.0616); transform-origin: 0px 0px;">to any information relating to the pricing, software or technical information, hardware, methods,</div>
<div class="dl" style="top: 351.88px; transform: scaleX(1.0318); transform-origin: 0px 0px;">processes, financial data, lists, apparatus, statistics, program, research, development or related</div>
<div class="dl" style="top: 373.43px; transform: scaleX(1.0469); transform-origin: 0px 0px;">information of Customer concerning past, present or future business activities of said entities, and/or</div>
<div class="dl" style="top: 394.98px; transform: scaleX(1.0448); transform-origin: 0px 0px;">the results of the provision of services performed by Consultant under this Agreement (collectively</div>
<div class="dl" style="top: 416.53px; transform: scaleX(1.0561); transform-origin: 0px 0px;">“Confidential Information”). Upon the written request of Customer, Consultant shall deliver to Customer</div>
<div class="dl" style="top: 438.08px; transform: scaleX(1.05); transform-origin: 0px 0px;">all items, including, but not limited to, drawings, descriptions, test data or other papers or documents,</div>
<div class="dl" style="top: 459.63px; transform: scaleX(1.0397); transform-origin: 0px 0px;">which may contain any Customer Confidential Information, as well as any copies thereof, that</div>
<div class="dl" style="top: 481.18px; transform: scaleX(1.0407); transform-origin: 0px 0px;">Consultant has in its possession. Confidential Information does not include information that: (i) has been</div>
<div class="dl" style="top: 502.73px; transform: scaleX(1.0437); transform-origin: 0px 0px;">previously published or is now or becomes public knowledge through no fault of the Consultant, its</div>
<div class="dl" style="top: 524.28px; transform: scaleX(1.0348); transform-origin: 0px 0px;">employees, agents or subcontractors; (ii) at the time of disclosure is already in the lawful possession of</div>
<div class="dl" style="top: 545.83px; transform: scaleX(1.0418); transform-origin: 0px 0px;">the other party unless previously designated as Confidential Information; (iii) was made available to the</div>
<div class="dl" style="top: 567.38px; transform: scaleX(1.0717); transform-origin: 0px 0px;">other party, without restriction of disclosure, by a third party not under obligation of confidentiality with</div>
<div class="dl" style="top: 588.93px; transform: scaleX(1.0568); transform-origin: 0px 0px;">respect to the disclosed information; or (iv) is independently developed by the other party without the</div>
<div class="dl" style="top: 610.48px; transform: scaleX(1.0367); transform-origin: 0px 0px;">use of or access to Confidential Information.</div>
<div class="dl" style="top: 677.43px; transform: scaleX(1.0363); transform-origin: 0px 0px;">Commercial Liability Insurance is the most detailed resource available on commercial general liability,</div>
<div class="dl" style="top: 699.03px; transform: scaleX(1.0679); transform-origin: 0px 0px;">owners and contractors protective liability, liquor liability, products completed operations liability,</div>
<div class="dl" style="top: 720.63px; transform: scaleX(1.0682); transform-origin: 0px 0px;">railroad protective liability, pollution liability, and umbrella liability insurance.</div><svg class="a" style="left:651.5px;top:493.5px;" width="8" height="5" viewBox="0 0 8 5"><path d="M0.6 0.6 L3.5 3.8 L6.6 0.8" fill="none" stroke="#e0383e" stroke-width="1"></path></svg>
<div class="a" style="left:784px;top:120px;width:390px;height:707px;background:#e6e6e6;"></div>
<div class="a" style="left:1173px;top:120px;width:1px;height:709px;background:#a0a0a0;"></div>
<div class="t" style="left: 795.6px; top: 129.09px; font-size: 23.8px; color: rgb(53, 99, 166); transform: scaleX(0.9659); transform-origin: 0px 0px;">Icertis Experience for Word</div>
<svg class="a" style="left:1097px;top:135px;" width="10" height="6" viewBox="0 0 10 6"><path d="M0.3 0.3 H9.7 L5 5.5Z" fill="#6a6a6a"></path></svg>
<svg class="a" style="left:1142px;top:133px;" width="12" height="11" viewBox="0 0 12 11"><path d="M1 0.8 L10.8 10.2 M10.8 0.8 L1 10.2" stroke="#555" stroke-width="1.4"></path></svg>
<div class="a" style="left:796px;top:164.7px;width:364px;height:650px;background:#fff;border:1px solid #d0d0d0;border-top:none"></div>
<div class="a" style="left:796px;top:211px;width:363.5px;height:4.5px;background:transparent;background:linear-gradient(#5a5a5a,#e8e8e8 90%,#fff)"></div>
<div class="a" style="left:796px;top:164.7px;width:363.5px;height:46.5px;background:#2b579a;"></div>
<div class="t" style="left: 803.3px; top: 173.8px; font-size: 30px; color: rgb(255, 255, 255); font-weight: bold; transform: scaleX(0.9051); transform-origin: 0px 0px;">ıcertis</div>
<svg class="a" style="left:804.8px;top:176.3px;" width="7" height="7" viewBox="0 0 7 7"><path d="M0.6 1.8 L5.6 0 L5.4 4.4 L0.4 6Z" fill="#e8262b"></path></svg>
<div class="a" style="left:884px;top:184px;width:1.3px;height:1.3px;background:#e0e6f0;border-radius:50%"></div>
<svg class="a" style="left:1072px;top:178px;" width="20" height="18" viewBox="0 0 20 18"><path d="M1.5 9.5 L10 1.8 L18.5 9.5 M4 7.5 V16.5 H8 V11.5 H12 V16.5 H16 V7.5" fill="none" stroke="#fff" stroke-width="1.5" stroke-linejoin="miter"></path></svg>
<div class="a" style="left:1098.8px;top:175px;width:1.3px;height:26px;background:#fff;"></div>
<svg class="a" style="left:1109px;top:177px;" width="22" height="22" viewBox="0 0 22 22"><circle cx="11" cy="6.5" r="5.3" fill="none" stroke="#fff" stroke-width="1.5"></circle><path d="M1.2 21 C2 15 6 12.2 11 12.2 C16 12.2 20 15 20.8 21" fill="none" stroke="#fff" stroke-width="1.5"></path></svg>
<svg class="a" style="left:804px;top:226px;" width="12" height="17" viewBox="0 0 12 17"><path d="M9.5 1.5 L2.5 8.3 L9.5 15" fill="none" stroke="#2b579a" stroke-width="1.5"></path></svg>
<div class="t" style="left: 823.2px; top: 225.78px; font-size: 17px; color: rgb(58, 58, 58); transform: scaleX(1.0434); transform-origin: 0px 0px;">Edit Agreement</div>
<svg class="a" style="left:1087px;top:224px;" width="18" height="18" viewBox="0 0 18 18"><circle cx="9" cy="9" r="7.2" fill="none" stroke="#2b579a" stroke-width="1.2"></circle><path d="M5.3 5.3 L10.2 7.8 L12.7 12.7 L7.8 10.2Z" fill="#2b579a"></path></svg>
<svg class="a" style="left:1123px;top:225px;" width="19" height="18" viewBox="0 0 19 18"><path d="M1.5 1.5 L17 16.5 H1.5Z" fill="none" stroke="#2b579a" stroke-width="1.3"></path><path d="M4 9.5 L8 13.8 H4Z" fill="#2b579a"></path><rect x="13" y="1.5" width="4" height="15" fill="none" stroke="#2b579a" stroke-width="1.2"></rect><path d="M14.5 4 H17 M14.5 7 H17 M14.5 10 H17" stroke="#2b579a" stroke-width="0.8"></path></svg>
<div class="t" style="left: 809.9px; top: 253.85px; font-size: 18px; color: rgb(58, 58, 58); transform: scaleX(0.9557); transform-origin: 0px 0px;">Master Service Agreement</div>
<div class="t" style="left: 805.6px; top: 276.06px; font-size: 11px; color: rgb(34, 34, 34); font-weight: bold; transform: scaleX(1.0751); transform-origin: 0px 0px;">Draft</div>
<div class="a" style="left:1128.1px;top:263.6px;width:12.3px;height:1.4px;background:#3a5c95;"></div>
<div class="a" style="left:1128.1px;top:267.9px;width:12.3px;height:1.4px;background:#3a5c95;"></div>
<div class="a" style="left:1128.1px;top:272.1px;width:12.3px;height:1.4px;background:#3a5c95;"></div>
<div class="a" style="left:805.6px;top:297.3px;width:171.1px;height:40px;background:#fff;border:1px solid #e4e4e4"></div>
<div class="t" style="left: 868.7px; top: 311.91px; font-size: 16px; color: rgb(58, 58, 58); transform: scaleX(0.9385); transform-origin: 0px 0px;">Details</div>
<div class="a" style="left:979.3px;top:298.3px;width:170.1px;height:39px;background:#1e4e92;"></div>
<div class="t" style="left: 1041.5px; top: 311.91px; font-size: 16px; color: rgb(255, 255, 255); transform: scaleX(0.9508); transform-origin: 0px 0px;">Library</div>
<svg class="a" style="left:804px;top:348px;" width="12" height="17" viewBox="0 0 12 17"><path d="M9.5 1.5 L2.5 8.3 L9.5 15" fill="none" stroke="#2b579a" stroke-width="1.5"></path></svg>
<div class="t" style="left: 822.2px; top: 347.58px; font-size: 17px; color: rgb(58, 58, 58); transform: scaleX(0.9358); transform-origin: 0px 0px;">Add Commitment</div>
<div class="t" style="left: 805.6px; top: 381.65px; font-size: 13px; color: rgb(58, 58, 58); transform: scaleX(1.0032); transform-origin: 0px 0px;">Selected text</div>
<div class="a" style="left:805.6px;top:402.3px;width:330.6px;height:77.7px;background:#f3f2f1;"></div>
<div class="t" style="left:814.6px;top:417.36px;font-size:13px;color:#959595;width:312.6px;display:flex;justify-content:space-between"><span>Commercial</span><span>Liability</span><span>Insurance</span><span>is</span><span>the</span><span>most</span><span>detailed</span></div>
<div class="t" style="left:814.6px;top:438.96px;font-size:13px;color:#959595;width:312.6px;display:flex;justify-content:space-between"><span>resource</span><span>available</span><span>on</span><span>commercial</span><span>general</span><span>liability,</span></div>
<div class="t" style="left:814.6px;top:458.86px;font-size:13px;color:#959595;width:312.6px;display:flex;justify-content:space-between"><span>owners</span><span>and</span><span>contractors</span><span>protective</span><span>liability,</span><span>liquor</span></div>
<div class="t" style="left: 1079px; top: 485.16px; font-size: 14px; color: rgb(43, 124, 211); transform: scaleX(0.9716); transform-origin: 0px 0px;">More</div>
<svg class="a" style="left:1112px;top:487px;" width="16" height="10" viewBox="0 0 16 10"><path d="M1.5 1.5 L8 8 L14.5 1.5" fill="none" stroke="#2b7cd3" stroke-width="1.2"></path></svg>
<div class="t" style="left: 805.6px; top: 507.55px; font-size: 13px; color: rgb(58, 58, 58); transform: scaleX(1.0413); transform-origin: 0px 0px;">Select type of commitment</div>
<div class="t" style="left: 970px; top: 506.15px; font-size: 13px; color: rgb(192, 57, 43); transform: scaleX(1.1852); transform-origin: 0px 0px;">*</div>
<div class="a" style="left:805.6px;top:527.5px;width:322.3px;height:28.3px;background:#fff;border:1px solid #cfcfcf"></div>
<div class="t" style="left: 815.6px; top: 535.36px; font-size: 14px; color: rgb(58, 58, 58); transform: scaleX(0.89); transform-origin: 0px 0px;">Clause</div>
<svg class="a" style="left:1104px;top:537.5px;" width="16" height="10" viewBox="0 0 16 10"><path d="M1 1.5 L7.5 8 L14 1.5" fill="none" stroke="#b8b8b8" stroke-width="1.3"></path></svg>
<div class="t" style="left: 805.6px; top: 573.35px; font-size: 13px; color: rgb(58, 58, 58); transform: scaleX(1.0148); transform-origin: 0px 0px;">Select business owner</div>
<div class="t" style="left: 940.5px; top: 571.95px; font-size: 13px; color: rgb(192, 57, 43); transform: scaleX(1.1852); transform-origin: 0px 0px;">*</div>
<div class="a" style="left:805.6px;top:594px;width:274.1px;height:78px;background:#f3f2f1;"></div>
<div class="t" style="left: 814.6px; top: 608.01px; font-size: 13.5px; color: rgb(166, 166, 166); transform: scaleX(0.9877); transform-origin: 0px 0px;">First Approver</div>
<svg class="a" style="left:1096px;top:597px;" width="22" height="18" viewBox="0 0 22 18"><g fill="none" stroke="#2b579a" stroke-width="1.3"><circle cx="4" cy="3.2" r="2"></circle><circle cx="15.5" cy="3.2" r="2"></circle><path d="M1 10 C1 7 2.5 5.8 4 5.8 C5.5 5.8 6.5 6.5 7 7.5"></path><path d="M18.5 10 C18.5 7 17 5.8 15.5 5.8 C14 5.8 13 6.5 12.5 7.5"></path><circle cx="9.8" cy="7.5" r="2.3"></circle><path d="M5.8 14.5 C6 11.5 7.8 10.2 9.8 10.2 C11.2 10.2 12.5 10.8 13.2 12"></path><path d="M15.8 11.5 V17.5 M12.8 14.5 H18.8"></path></g></svg>
<div class="a" style="left:805.6px;top:681px;width:22.3px;height:22.2px;background:#fff;border:1.5px solid #555;border-radius:2px"></div>
<div class="t" style="left: 837.2px; top: 685.24px; font-size: 16.5px; color: rgb(58, 58, 58); transform: scaleX(0.9397); transform-origin: 0px 0px;">Recurring Commitment</div>
<div class="t" style="left: 805.6px; top: 711.85px; font-size: 13px; color: rgb(58, 58, 58); transform: scaleX(1.0082); transform-origin: 0px 0px;">Due date</div>
<div class="a" style="left:805.6px;top:732.1px;width:322.3px;height:25.9px;background:#fff;border:1px solid #cfcfcf"></div>
<div class="t" style="left: 816.6px; top: 739.81px; font-size: 13.5px; color: rgb(58, 58, 58); transform: scaleX(0.9478); transform-origin: 0px 0px;">Tue Jul 21 2020</div>
<svg class="a" style="left:1102px;top:737px;" width="16" height="15" viewBox="0 0 16 15"><g fill="none" stroke="#8a8a8a" stroke-width="1"><rect x="1.5" y="2.5" width="13" height="11"></rect><path d="M1.5 5.5 H14.5"></path><path d="M4.5 0.8 V3.5 M11.5 0.8 V3.5"></path><path d="M4.5 7 V13 M7 7 V13 M9.5 7 V13 M12 7 V13"></path></g></svg>
<div class="a" style="left:873px;top:773px;width:174.1px;height:35.2px;background:#1e4e92;border-radius:2px"></div>
<div class="t" style="left: 897.6px; top: 783.48px; font-size: 16px; color: rgb(255, 255, 255); font-weight: bold; transform: scaleX(0.9473); transform-origin: 0px 0px;">Add Commitment</div>
<div class="a" style="left:1056.4px;top:773px;width:93px;height:35.2px;background:#fff;border:1.3px solid #aaa;border-radius:3px"></div>
<div class="t" style="left: 1079.7px; top: 783.48px; font-size: 16px; color: rgb(58, 58, 58); transform: scaleX(0.9335); transform-origin: 0px 0px;">Cancel</div>
</body></html>
